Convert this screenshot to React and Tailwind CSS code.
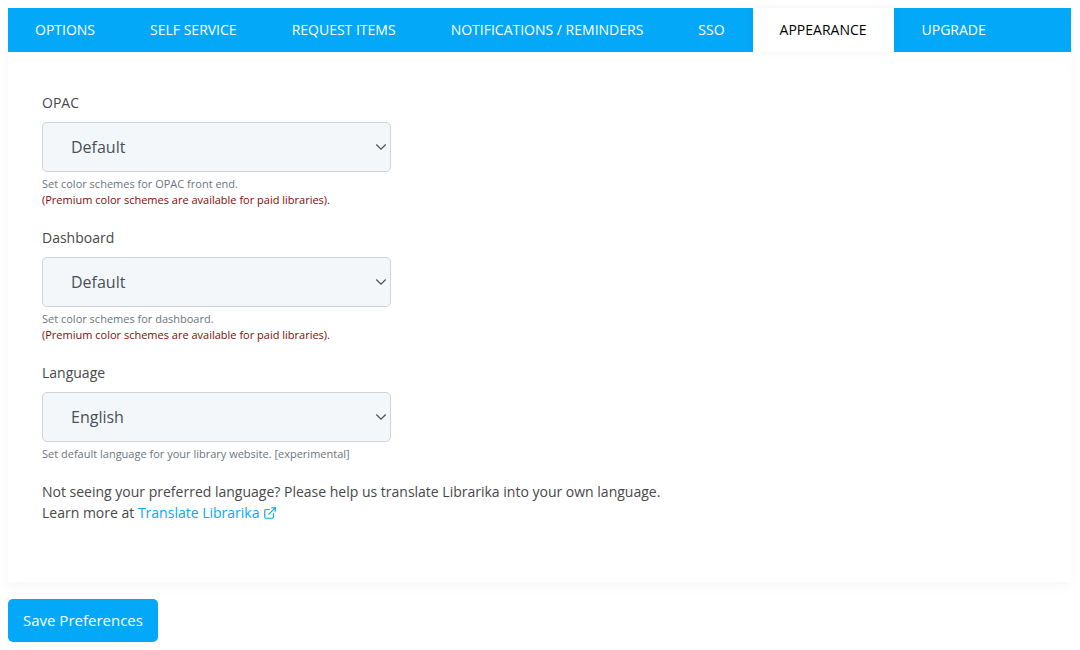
import { ExternalLink } from "lucide-react";

const tabs = [
  "Options",
  "Self Service",
  "Request Items",
  "Notifications / Reminders",
  "SSO",
  "Appearance",
  "Upgrade",
];

function SelectField({ id, label, options, help, note }) {
  return (
    <div>
      <label htmlFor={id} className="block text-sm leading-5">
        {label}
      </label>
      <div className="mt-[9px] grid w-full max-w-[349px] items-center">
        <select
          id={id}
          aria-describedby={`${id}-help`}
          className="col-start-1 row-start-1 h-[50px] w-full appearance-none rounded-[5px] border border-[#cdd4da] bg-[#f3f7fa] px-7 text-base text-[#495057]"
        >
          {options.map((option) => (
            <option key={option}>{option}</option>
          ))}
        </select>
        <svg
          aria-hidden="true"
          viewBox="0 0 12 8"
          className="pointer-events-none col-start-1 row-start-1 mr-1 h-2 w-3 justify-self-end"
          fill="none"
          stroke="#50555a"
          strokeWidth="1.3"
        >
          <path d="M1.3 1.5 6 6.2l4.7-4.7" />
        </svg>
      </div>
      <div id={`${id}-help`} className="mt-1 text-[11px] leading-4 text-[#6c757d]">
        <p>{help}</p>
        {note && <p className="text-[#850b05]">{note}</p>}
      </div>
    </div>
  );
}

export default function App() {
  return (
    <div className="bg-white p-2 pr-[9px] font-['Open_Sans',sans-serif] text-[#484848]">
      <div className="shadow-[0_4px_12px_rgba(0,0,0,0.04)]">
        <nav className="flex h-11 gap-px bg-[#03a9f8]">
          {tabs.map((tab) => (
            <a
              key={tab}
              href="#"
              aria-current={tab === "Appearance" ? "page" : undefined}
              className="flex items-center px-[27px] text-sm whitespace-nowrap text-white uppercase aria-[current=page]:bg-white aria-[current=page]:text-black aria-[current=page]:shadow-[0_0_8px_rgba(0,0,0,0.05)]"
            >
              {tab}
            </a>
          ))}
        </nav>
        <div className="bg-white px-[34px] pt-[41px] pb-[59px]">
          <form id="appearance">
            <div className="flex flex-col gap-5">
              <SelectField
                id="opac"
                label="OPAC"
                options={["Default"]}
                help="Set color schemes for OPAC front end."
                note="(Premium color schemes are available for paid libraries)."
              />
              <SelectField
                id="dashboard"
                label="Dashboard"
                options={["Default"]}
                help="Set color schemes for dashboard."
                note="(Premium color schemes are available for paid libraries)."
              />
              <SelectField
                id="language"
                label="Language"
                options={["English"]}
                help="Set default language for your library website. [experimental]"
              />
            </div>
            <p className="mt-[19px] text-sm leading-[21px]">
              Not seeing your preferred language? Please help us translate Librarika into your own language.
              <br />
              Learn more at{" "}
              <a href="#" className="text-[#03a9f8]">
                Translate Librarika{" "}
                <ExternalLink aria-hidden="true" className="inline size-3.5 align-[-2px]" strokeWidth={2} />
              </a>
            </p>
          </form>
        </div>
      </div>
      <button
        type="submit"
        form="appearance"
        className="mt-[17px] h-[43px] rounded-[5px] bg-[#03a9f8] px-[15px] text-[15px] text-white"
      >
        Save Preferences
      </button>
    </div>
  );
}
